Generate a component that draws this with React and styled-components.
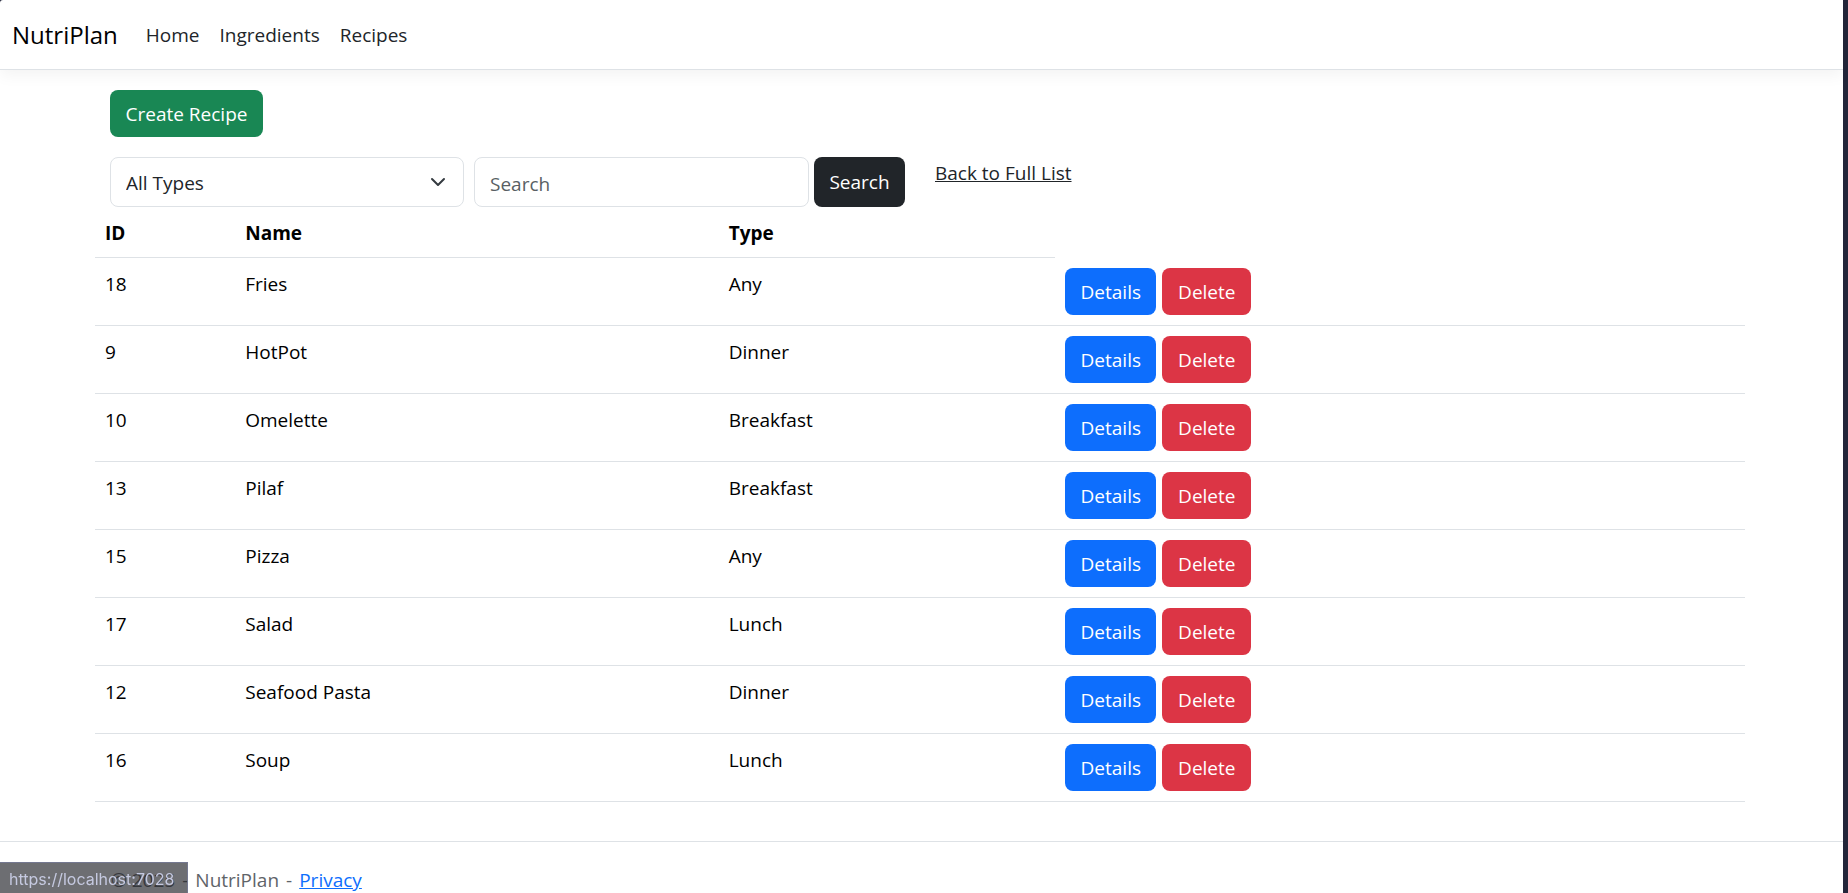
import React from 'react';
import styled, { createGlobalStyle } from 'styled-components';

const GlobalStyle = createGlobalStyle`
  *, *::before, *::after { box-sizing: border-box; }
  body {
    margin: 0;
    background: #23263a;
    color: #212529;
    font-family: "Segoe UI", "Open Sans", "Noto Sans", sans-serif;
    font-size: 19px;
    line-height: 30px;
  }
  a { color: inherit; }
`;

const Page = styled.div`
  display: flex;
  flex-direction: column;
  min-height: 100vh;
  margin-right: 5px;
  background: #fff;
  border-top-left-radius: 3px;
`;

const Navbar = styled.header`
  display: flex;
  align-items: center;
  gap: 20px;
  height: 70px;
  padding: 0 12px;
  border-bottom: 1px solid #dee2e6;
  box-shadow: 0 5px 15px rgba(0, 0, 0, 0.05);
`;

const Brand = styled.a`
  padding-right: 8px;
  color: #000;
  font-size: 24px;
  text-decoration: none;
`;

const NavLinks = styled.nav`
  display: flex;
  gap: 20px;
`;

const NavLink = styled.a`
  text-decoration: none;
`;

const Main = styled.main`
  flex: 1;
  padding: 20px 98px 39px 95px;
`;

const Toolbar = styled.div`
  display: flex;
  padding: 0 15px 20px;
`;

const variants = {
  success: '#198754',
  primary: '#0d6efd',
  danger: '#dc3545',
  dark: '#212529',
};

const Button = styled.button`
  min-height: 47px;
  padding: 0;
  width: ${(p) => p.$width}px;
  border: 0;
  border-radius: 8px;
  background: ${(p) => variants[p.$variant]};
  color: #fff;
  font: inherit;
  white-space: nowrap;
`;

const Filters = styled.form`
  display: flex;
  height: 50px;
  padding: 0 15px;
`;

const TypeField = styled.div`
  position: relative;
  flex: 0 1 354px;
  margin-right: 10px;
`;

const TypeSelect = styled.select`
  width: 100%;
  height: 100%;
  padding: 2px 45px 0 15px;
  appearance: none;
  border: 1px solid #dee2e6;
  border-radius: 8px;
  background: #fff;
  color: inherit;
  font: inherit;
`;

const Chevron = styled.svg`
  position: absolute;
  top: 17px;
  right: 18px;
  width: 16px;
  height: 16px;
  pointer-events: none;
`;

const SearchInput = styled.input`
  flex: 0 1 335px;
  min-width: 0;
  margin-right: 5px;
  padding: 4px 15px 0;
  border: 1px solid #dee2e6;
  border-radius: 8px;
  color: inherit;
  font: inherit;
  &::placeholder { color: #595f64; opacity: 1; }
`;

const BackLink = styled.a`
  margin-left: 30px;
  line-height: 32px;
  white-space: nowrap;
`;

const Table = styled.table`
  width: 100%;
  table-layout: fixed;
  border-collapse: separate;
  border-spacing: 0;
  color: #000;
  line-height: 32px;
`;

const Column = styled.col`
  width: ${(p) => p.$width};
`;

const HeadCell = styled.th`
  height: 51px;
  padding: 10px 10px 8px;
  border-bottom: 1px solid #dee2e6;
  text-align: left;
  vertical-align: top;
`;

const Cell = styled.td`
  height: 68px;
  padding: 10px;
  border-bottom: 1px solid #dee2e6;
  vertical-align: top;
`;

const Actions = styled.div`
  display: flex;
  gap: 6px;
`;

const Footer = styled.footer`
  display: flex;
  gap: 7px;
  padding: 26px 98px 0 111px;
  border-top: 1px solid #dee2e6;
  color: #5f6469;
  line-height: 25px;
`;

const PrivacyLink = styled.a`
  color: #0d6efd;
`;

const StatusBar = styled.div`
  position: fixed;
  left: 0;
  bottom: 0;
  width: 188px;
  height: 31px;
  padding-left: 9px;
  border-top: 1px solid #747890;
  border-right: 1px solid #747890;
  background: rgba(30, 32, 38, 0.65);
  color: #c5c9e0;
  font-family: Inter, sans-serif;
  font-size: 16px;
  line-height: 33px;
`;

const recipes = [
  { id: 18, name: 'Fries', type: 'Any' },
  { id: 9, name: 'HotPot', type: 'Dinner' },
  { id: 10, name: 'Omelette', type: 'Breakfast' },
  { id: 13, name: 'Pilaf', type: 'Breakfast' },
  { id: 15, name: 'Pizza', type: 'Any' },
  { id: 17, name: 'Salad', type: 'Lunch' },
  { id: 12, name: 'Seafood Pasta', type: 'Dinner' },
  { id: 16, name: 'Soup', type: 'Lunch' },
];

export default function App() {
  return (
    <>
      <GlobalStyle />
      <Page>
        <Navbar>
          <Brand href="#">NutriPlan</Brand>
          <NavLinks>
            <NavLink href="#">Home</NavLink>
            <NavLink href="#">Ingredients</NavLink>
            <NavLink href="#">Recipes</NavLink>
          </NavLinks>
        </Navbar>
        <Main>
          <Toolbar>
            <Button type="button" $variant="success" $width={153}>Create Recipe</Button>
          </Toolbar>
          <Filters onSubmit={(e) => e.preventDefault()}>
            <TypeField>
              <TypeSelect aria-label="Recipe type" defaultValue="">
                <option value="">All Types</option>
                <option>Any</option>
                <option>Breakfast</option>
                <option>Lunch</option>
                <option>Dinner</option>
              </TypeSelect>
              <Chevron viewBox="0 0 16 16" fill="none" stroke="#343a40" strokeWidth="2" strokeLinecap="round" strokeLinejoin="round" aria-hidden="true">
                <path d="m2 5 6 6 6-6" />
              </Chevron>
            </TypeField>
            <SearchInput type="text" aria-label="Search recipes" placeholder="Search" />
            <Button type="submit" $variant="dark" $width={91}>Search</Button>
            <BackLink href="#">Back to Full List</BackLink>
          </Filters>
          <Table>
            <colgroup>
              <Column $width="8.5%" />
              <Column $width="29.3%" />
              <Column $width="20.4%" />
              <Column />
            </colgroup>
            <thead>
              <tr>
                <HeadCell scope="col">ID</HeadCell>
                <HeadCell scope="col">Name</HeadCell>
                <HeadCell scope="col">Type</HeadCell>
              </tr>
            </thead>
            <tbody>
              {recipes.map((recipe) => (
                <tr key={recipe.id}>
                  <Cell>{recipe.id}</Cell>
                  <Cell>{recipe.name}</Cell>
                  <Cell>{recipe.type}</Cell>
                  <Cell>
                    <Actions>
                      <Button type="button" $variant="primary" $width={91}>Details</Button>
                      <Button type="button" $variant="danger" $width={89}>Delete</Button>
                    </Actions>
                  </Cell>
                </tr>
              ))}
            </tbody>
          </Table>
        </Main>
        <Footer>
          <span>© 2025</span>
          <span>-</span>
          <span>NutriPlan</span>
          <span>-</span>
          <PrivacyLink href="#">Privacy</PrivacyLink>
        </Footer>
      </Page>
      <StatusBar>https://localhost:7028</StatusBar>
    </>
  );
}
